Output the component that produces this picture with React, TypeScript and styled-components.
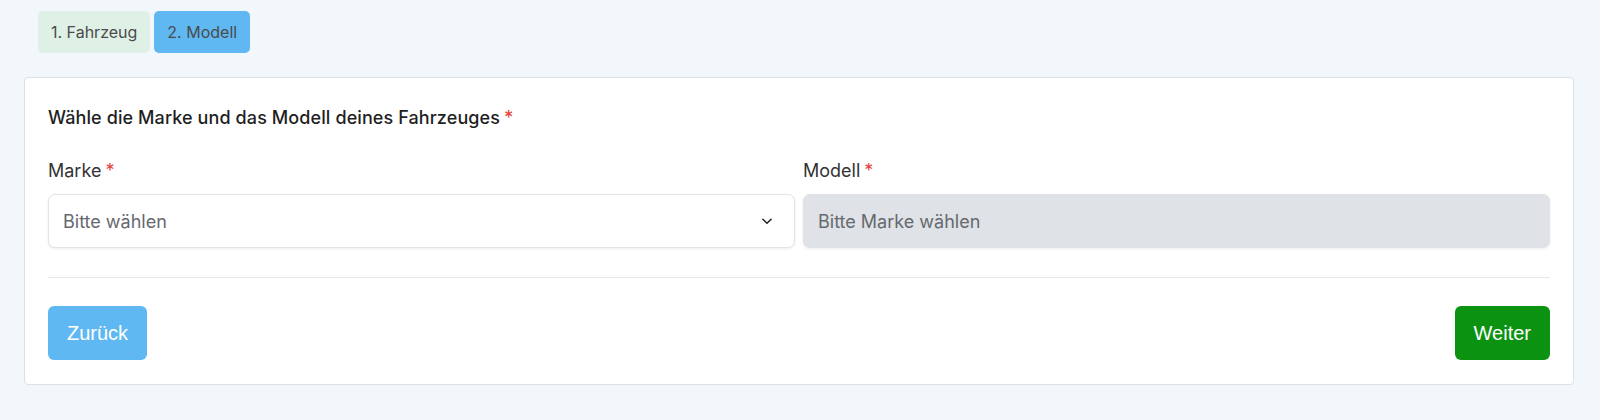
import React from "react";
import styled, { createGlobalStyle } from "styled-components";

const Global = createGlobalStyle`
  html, body { margin: 0; padding: 0; background: #f2f7fb; }
  body { font-family: "Inter", "Noto Sans", sans-serif; }
  * { box-sizing: border-box; }
`;

const Page = styled.div`
  padding: 11px 26px 0 24px;
  display: flex;
  flex-direction: column;
  gap: 24px;
`;

const Steps = styled.div`
  display: flex;
  gap: 4px;
  margin-left: 14px;
`;

const Step = styled.div<{ $active?: boolean }>`
  height: 42px;
  padding: 0 13px;
  display: flex;
  align-items: center;
  border-radius: 5px;
  font-size: 16px;
  color: #4b4b4b;
  background: ${(p) => (p.$active ? "#5fb8f1" : "#dff0e6")};
`;

const Card = styled.div`
  background: #fff;
  border: 1px solid #dde1e5;
  border-radius: 4px;
  padding: 28px 23px 24px 23px;
  display: flex;
  flex-direction: column;
`;

const Title = styled.div`
  font-size: 18px;
  font-weight: 500;
  letter-spacing: 0.1px;
  color: #1f1f1f;
  line-height: 24px;
`;

const Req = styled.span`
  color: #e0443e;
  margin-left: 4px;
`;

const Grid = styled.div`
  display: grid;
  grid-template-columns: 1fr 1fr;
  gap: 8px;
  margin-top: 29px;
`;

const Field = styled.div`
  display: flex;
  flex-direction: column;
  gap: 11px;
`;

const Label = styled.div`
  font-size: 18px;
  color: #333;
  line-height: 24px;
`;

const Select = styled.div<{ $disabled?: boolean }>`
  height: 54px;
  border-radius: 7px;
  border: 1px solid ${(p) => (p.$disabled ? "#dfe2e6" : "#e1e4e8")};
  background: ${(p) => (p.$disabled ? "#dfe2e6" : "#fff")};
  box-shadow: 0 1px 3px rgba(0, 0, 0, 0.08);
  display: flex;
  align-items: center;
  justify-content: space-between;
  padding: 0 20px 0 14px;
  font-size: 18px;
  color: #66696f;
`;

const Divider = styled.div`
  height: 1px;
  background: #e6e8eb;
  margin-top: 29px;
`;

const Actions = styled.div`
  display: flex;
  justify-content: space-between;
  margin-top: 28px;
`;

const Button = styled.button<{ $variant: "back" | "next" }>`
  height: 54px;
  padding: 0 19px;
  border: none;
  border-radius: 6px;
  font-family: "Liberation Sans", Arial, sans-serif;
  font-size: 20px;
  color: #fff;
  background: ${(p) => (p.$variant === "next" ? "#0b9211" : "#5fb8f1")};
  cursor: pointer;
`;

export default function App() {
  return (
    <>
      <Global />
      <Page>
        <Steps>
          <Step>1. Fahrzeug</Step>
          <Step $active>2. Modell</Step>
        </Steps>
        <Card>
          <Title>
            Wähle die Marke und das Modell deines Fahrzeuges<Req>*</Req>
          </Title>
          <Grid>
            <Field>
              <Label>
                Marke<Req>*</Req>
              </Label>
              <Select>
                <span>Bitte wählen</span>
                <svg width="14" height="14" viewBox="0 0 24 24" fill="none" stroke="#222" strokeWidth="2.6" strokeLinecap="round" strokeLinejoin="round">
                  <path d="M5 9l7 7 7-7" />
                </svg>
              </Select>
            </Field>
            <Field>
              <Label>
                Modell<Req>*</Req>
              </Label>
              <Select $disabled>
                <span>Bitte Marke wählen</span>
              </Select>
            </Field>
          </Grid>
          <Divider />
          <Actions>
            <Button $variant="back">Zurück</Button>
            <Button $variant="next">Weiter</Button>
          </Actions>
        </Card>
      </Page>
    </>
  );
}
